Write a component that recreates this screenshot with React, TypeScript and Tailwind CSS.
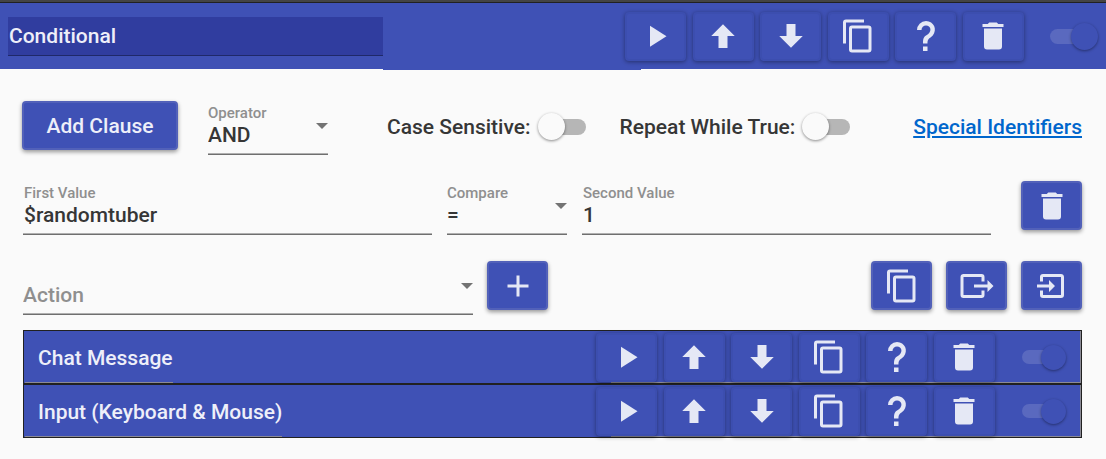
import type { ReactNode } from "react";

const ICONS = {
  play: "M8,5.14V19.14L19,12.14L8,5.14Z",
  up: "M15,20H9V12H4.16L12,4.16L19.84,12H15V20Z",
  down: "M9,4H15V12H19.84L12,19.84L4.16,12H9V4Z",
  copy: "M19,21H8V7H19M19,5H8A2,2 0 0,0 6,7V21A2,2 0 0,0 8,23H19A2,2 0 0,0 21,21V7A2,2 0 0,0 19,5M16,1H4A2,2 0 0,0 2,3V17H4V3H16V1Z",
  help: "M10,19H13V22H10V19M12,2C17.35,2.22 19.68,7.62 16.5,11.67C15.67,12.67 14.33,13.33 13.67,14.17C13,15 13,16 13,17H10C10,15.33 10,13.92 10.67,12.92C11.33,11.92 12.67,11.33 13.5,10.67C15.92,8.43 15.32,5.26 12,5A3,3 0 0,0 9,8H6A6,6 0 0,1 12,2Z",
  trash: "M19,4H15.5L14.5,3H9.5L8.5,4H5V6H19M6,19A2,2 0 0,0 8,21H16A2,2 0 0,0 18,19V7H6V19Z",
  plus: "M19,13H13V19H11V13H5V11H11V5H13V11H19V13Z",
  exportBox:
    "M23,12L19,8V11H10V13H19V16M1,18V6C1,4.89 1.9,4 3,4H15A2,2 0 0,1 17,6V9H15V6H3V18H15V15H17V18A2,2 0 0,1 15,20H3A2,2 0 0,1 1,18Z",
  importBox:
    "M14,12L10,8V11H2V13H10V16M20,18V6C20,4.89 19.1,4 18,4H6A2,2 0 0,0 4,6V9H6V6H18V18H6V15H4V18A2,2 0 0,0 6,20H18A2,2 0 0,0 20,18Z",
};

type IconName = keyof typeof ICONS;

const RAISED =
  "rounded-[4px] border-2 border-[#5261b9] bg-[#3f51b5] shadow-[0_2px_4px_rgba(0,0,0,0.4)]";
const EMBEDDED =
  "rounded-[4px] border-2 border-[#3c4eaf] bg-[#3f51b5] shadow-[0_1px_4px_rgba(0,0,0,0.4)]";

function IconButton({ icon, label, embedded }: { icon: IconName; label: string; embedded?: boolean }) {
  return (
    <button
      type="button"
      aria-label={label}
      className={`flex h-[49px] w-[61px] shrink-0 items-center justify-center text-[#e5e8f5] ${
        embedded ? EMBEDDED : RAISED
      }`}
    >
      <svg viewBox="0 0 24 24" className="size-9 shrink-0" fill="currentColor" aria-hidden="true">
        <path d={ICONS[icon]} />
      </svg>
    </button>
  );
}

const HEADER_ACTIONS: { icon: IconName; label: string }[] = [
  { icon: "play", label: "Play" },
  { icon: "up", label: "Move up" },
  { icon: "down", label: "Move down" },
  { icon: "copy", label: "Duplicate" },
  { icon: "help", label: "Help" },
  { icon: "trash", label: "Delete" },
];

function HeaderActions() {
  return (
    <div className="relative flex w-[399px] shrink-0 justify-between">
      {HEADER_ACTIONS.map((a) => (
        <IconButton key={a.icon} icon={a.icon} label={a.label} embedded />
      ))}
    </div>
  );
}

function EnabledToggle({ small }: { small?: boolean }) {
  return (
    <label className={`relative flex shrink-0 items-center ${small ? "h-[25px] w-11" : "h-[27px] w-12"}`}>
      <input type="checkbox" defaultChecked aria-label="Enabled" className="peer sr-only" />
      <span className={`w-9 rounded-full bg-[#5a69bf] ${small ? "h-[14px]" : "h-[15px]"}`} />
      <span
        className={`absolute left-0 rounded-full bg-[#3f51b5] shadow-[0_1px_3px_rgba(0,0,0,0.4)] peer-checked:right-0 peer-checked:left-auto ${
          small ? "size-[25px]" : "size-[27px]"
        }`}
      />
    </label>
  );
}

function LabelledToggle({ label }: { label: string }) {
  return (
    <label className="flex shrink-0 items-center gap-[7px] whitespace-nowrap">
      {label}
      <span className="relative flex h-[27px] w-12 items-center justify-end">
        <input type="checkbox" className="peer sr-only" />
        <span className="h-4 w-10 rounded-full bg-[#b6b6b6]" />
        <span className="absolute left-0 size-[27px] rounded-full bg-[#fafafa] shadow-[0_1px_3px_rgba(0,0,0,0.45)] peer-checked:right-0 peer-checked:left-auto" />
      </span>
    </label>
  );
}

function Field({ id, label, className, children }: { id: string; label: string; className: string; children: ReactNode }) {
  return (
    <div
      className={`relative flex flex-col self-end border-b border-[#6f6f6f] pb-[7px] shadow-[inset_0_-1px_#b0b0b0] ${className}`}
    >
      <label htmlFor={id} className="h-5 text-[15px] leading-5 text-[#8f8f8f]">
        {label}
      </label>
      {children}
    </div>
  );
}

function Dropdown({ id, options, muted }: { id: string; options: string[]; muted?: boolean }) {
  return (
    <>
      <select
        id={id}
        aria-label={muted ? "Action" : undefined}
        className={`h-6 w-full appearance-none bg-transparent p-0 leading-6 outline-none ${muted ? "text-[#8f8f8f]" : ""}`}
      >
        {options.map((o) => (
          <option key={o}>{o}</option>
        ))}
      </select>
      <svg
        viewBox="0 0 12 6"
        className="pointer-events-none absolute top-5 right-0 h-[6px] w-3"
        fill="#737373"
        aria-hidden="true"
      >
        <path d="M0 0H12L6 6Z" />
      </svg>
    </>
  );
}

function TextBox({ id, value }: { id: string; value: string }) {
  return (
    <input
      id={id}
      type="text"
      defaultValue={value}
      className="h-6 w-full min-w-0 bg-transparent p-0 leading-6 outline-none"
    />
  );
}

function ActionRow({ name }: { name: string }) {
  return (
    <li className="relative flex h-[54px] items-center justify-between border border-[#212121] bg-[#3f51b5] pr-[15px]">
      <span className="ml-px flex h-full items-center border-b border-[#8a8a96] pt-[2px] pl-[13px] text-[#eeeff9]">
        {name}
      </span>
      <span className="absolute right-0 bottom-0 h-full w-[470px] border-r border-b border-r-[#8a8a96] border-b-[#8a8a96]" />
      <div className="flex items-center gap-[27px]">
        <HeaderActions />
        <EnabledToggle small />
      </div>
    </li>
  );
}

export default function App() {
  return (
    <main className="min-h-screen bg-[#fafafa] font-['Roboto',sans-serif] text-[21px] leading-6 font-medium text-[#363636]">
      <div className="h-[3px] border-b border-[#212121] bg-[#444444]" />
      <header className="relative flex h-[66px] items-center justify-between bg-[#3f51b5] px-2 after:absolute after:top-full after:right-[465px] after:left-[383px] after:h-px after:bg-[#3f51b5]">
        <input
          type="text"
          aria-label="Name"
          defaultValue="Conditional"
          className="h-[39px] w-[375px] min-w-0 border-b border-[#1f2969] bg-[#303d9f] px-px text-[#eeeff9] outline-none"
        />
        <div className="flex items-center gap-[26px]">
          <HeaderActions />
          <EnabledToggle />
        </div>
      </header>

      <div className="flex flex-col gap-[26px] px-6 pt-8 pl-[22px]">
        <div className="flex h-[54px] items-start">
          <button type="button" className={`h-[49px] w-[156px] shrink-0 text-[#eeeff9] ${RAISED}`}>
            Add Clause
          </button>
          <Field id="operator" label="Operator" className="ml-[30px] w-[120px] shrink-0">
            <Dropdown id="operator" options={["AND", "OR"]} />
          </Field>
          <div className="ml-[59px] flex h-[51px] grow items-center gap-[34px]">
            <LabelledToggle label="Case Sensitive:" />
            <LabelledToggle label="Repeat While True:" />
            <a href="#identifiers" className="ml-auto whitespace-nowrap text-[#0066cc] underline">
              Special Identifiers
            </a>
          </div>
        </div>

        <div className="flex h-[54px] items-start pl-px">
          <Field id="first" label="First Value" className="min-w-0 flex-1 pl-px">
            <TextBox id="first" value="$randomtuber" />
          </Field>
          <Field id="compare" label="Compare" className="mx-[15px] w-[120px] shrink-0">
            <Dropdown id="compare" options={["=", "<>"]} />
          </Field>
          <Field id="second" label="Second Value" className="mr-[30px] min-w-0 flex-1 pl-px">
            <TextBox id="second" value="1" />
          </Field>
          <IconButton icon="trash" label="Delete clause" />
        </div>

        <div className="flex h-[54px] items-start gap-[14px] pl-px">
          <Field id="action" label="" className="w-[450px] shrink-0">
            <Dropdown id="action" options={["Action"]} muted />
          </Field>
          <IconButton icon="plus" label="Add action" />
          <div className="ml-auto flex gap-[14px]">
            <IconButton icon="copy" label="Copy actions" />
            <IconButton icon="exportBox" label="Export actions" />
            <IconButton icon="importBox" label="Import actions" />
          </div>
        </div>
      </div>

      <ul className="mt-[15px] mr-6 ml-[23px]">
        <ActionRow name="Chat Message" />
        <ActionRow name="Input (Keyboard & Mouse)" />
      </ul>
    </main>
  );
}
